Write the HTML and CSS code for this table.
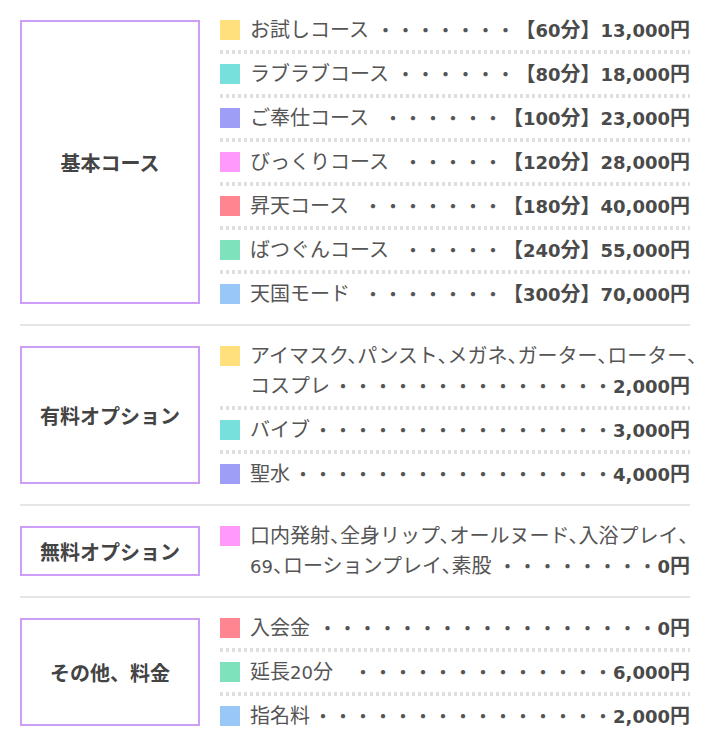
FILE: index.html
```html
<!DOCTYPE html>
<html lang="ja">
<head>
<meta charset="utf-8">
<title>料金システム</title>
<link rel="stylesheet" href="styles.css">
</head>
<body>
<div class="menu">
  <section class="group">
    <div class="label">基本コース</div>
    <ul class="items">
      <li class="item"><span class="sw c-yellow"></span><div class="body"><div class="line"><span class="name">お試しコース</span><span class="dots">・・・・・・・</span><span class="price">【<span class="num">60</span>分】<span class="num">13,000</span>円</span></div></div></li>
      <li class="item"><span class="sw c-cyan"></span><div class="body"><div class="line"><span class="name">ラブラブコース</span><span class="dots">・・・・・・</span><span class="price">【<span class="num">80</span>分】<span class="num">18,000</span>円</span></div></div></li>
      <li class="item"><span class="sw c-violet"></span><div class="body"><div class="line"><span class="name">ご奉仕コース</span><span class="dots">・・・・・・</span><span class="price">【<span class="num">100</span>分】<span class="num">23,000</span>円</span></div></div></li>
      <li class="item"><span class="sw c-pink"></span><div class="body"><div class="line"><span class="name">びっくりコース</span><span class="dots">・・・・・</span><span class="price">【<span class="num">120</span>分】<span class="num">28,000</span>円</span></div></div></li>
      <li class="item"><span class="sw c-coral"></span><div class="body"><div class="line"><span class="name">昇天コース</span><span class="dots">・・・・・・・</span><span class="price">【<span class="num">180</span>分】<span class="num">40,000</span>円</span></div></div></li>
      <li class="item"><span class="sw c-mint"></span><div class="body"><div class="line"><span class="name">ばつぐんコース</span><span class="dots">・・・・・</span><span class="price">【<span class="num">240</span>分】<span class="num">55,000</span>円</span></div></div></li>
      <li class="item"><span class="sw c-sky"></span><div class="body"><div class="line"><span class="name">天国モード</span><span class="dots">・・・・・・・</span><span class="price">【<span class="num">300</span>分】<span class="num">70,000</span>円</span></div></div></li>
    </ul>
  </section>
  <section class="group">
    <div class="label">有料オプション</div>
    <ul class="items">
      <li class="item"><span class="sw c-yellow"></span><div class="body"><div class="pre halt">アイマスク、パンスト、メガネ、ガーター、ローター、</div><div class="line"><span class="name">コスプレ</span><span class="dots">・・・・・・・・・・・・・・</span><span class="price"><span class="num">2,000</span>円</span></div></div></li>
      <li class="item"><span class="sw c-cyan"></span><div class="body"><div class="line"><span class="name">バイブ</span><span class="dots">・・・・・・・・・・・・・・・</span><span class="price"><span class="num">3,000</span>円</span></div></div></li>
      <li class="item"><span class="sw c-violet"></span><div class="body"><div class="line"><span class="name">聖水</span><span class="dots">・・・・・・・・・・・・・・・・</span><span class="price"><span class="num">4,000</span>円</span></div></div></li>
    </ul>
  </section>
  <section class="group">
    <div class="label">無料オプション</div>
    <ul class="items">
      <li class="item"><span class="sw c-pink"></span><div class="body"><div class="pre halt">口内発射、全身リップ、オールヌード、入浴プレイ、</div><div class="line"><span class="name halt"><span class="numr">69</span>、ローションプレイ、素股</span><span class="dots">・・・・・・・・</span><span class="price"><span class="num">0</span>円</span></div></div></li>
    </ul>
  </section>
  <section class="group">
    <div class="label">その他、料金</div>
    <ul class="items">
      <li class="item"><span class="sw c-coral"></span><div class="body"><div class="line"><span class="name">入会金</span><span class="dots">・・・・・・・・・・・・・・・・・</span><span class="price"><span class="num">0</span>円</span></div></div></li>
      <li class="item"><span class="sw c-mint"></span><div class="body"><div class="line"><span class="name">延長<span class="numr">20</span>分</span><span class="dots">・・・・・・・・・・・・・</span><span class="price"><span class="num">6,000</span>円</span></div></div></li>
      <li class="item"><span class="sw c-sky"></span><div class="body"><div class="line"><span class="name">指名料</span><span class="dots">・・・・・・・・・・・・・・・</span><span class="price"><span class="num">2,000</span>円</span></div></div></li>
    </ul>
  </section>
</div>
</body>
</html>
```

FILE: styles.css
```css
* {
  box-sizing: border-box;
}

html,
body {
  margin: 0;
  background: #ffffff;
}

body {
  font-family: "DejaVu Sans", "Noto Sans CJK JP", sans-serif;
  color: #555555;
}

.menu {
  width: 710px;
  padding: 0 20px;
}

.group {
  display: flex;
  gap: 20px;
  padding: 15px 0;
}

.group + .group {
  border-top: 2px solid #e6e6e6;
}

.label {
  flex: 0 0 180px;
  margin: 5px 0;
  border: 2px solid #cc9ef9;
  display: flex;
  align-items: center;
  justify-content: center;
  font-family: "Noto Sans CJK JP", sans-serif;
  font-weight: 700;
  font-size: 20px;
  color: #444444;
}

.items {
  flex: 1;
  min-width: 0;
  list-style: none;
  margin: 0;
  padding: 0;
}

.item {
  display: flex;
  font-size: 20px;
  line-height: 30px;
  padding-bottom: 9px;
  margin-bottom: 5px;
  background: repeating-linear-gradient(to right, #dfdfdf 0 3px, transparent 3px 6px) left bottom / 100% 4px no-repeat;
}

.item:last-child {
  padding-bottom: 0;
  margin-bottom: 0;
  background: none;
}

.sw {
  flex: 0 0 20px;
  height: 20px;
  margin: 5px 10px 0 0;
}

.c-yellow { background: #ffe07d; }
.c-cyan { background: #78e0dc; }
.c-violet { background: #9f9ef7; }
.c-pink { background: #ff99fc; }
.c-coral { background: #ff8590; }
.c-mint { background: #7ee2bd; }
.c-sky { background: #99c8f8; }

.body {
  flex: 1;
  min-width: 0;
}

.pre {
  white-space: nowrap;
}

.line {
  display: flex;
  height: 30px;
}

.name {
  flex: none;
  white-space: nowrap;
}

.dots {
  flex: none;
  margin-left: auto;
  white-space: nowrap;
  font-family: "Noto Sans CJK JP", sans-serif;
}

.price {
  flex: none;
  white-space: nowrap;
  font-weight: 700;
  color: #4a4a4a;
}

.num,
.numr {
  font-size: 18px;
  line-height: 1;
}

.halt {
  font-feature-settings: "halt";
}
```
